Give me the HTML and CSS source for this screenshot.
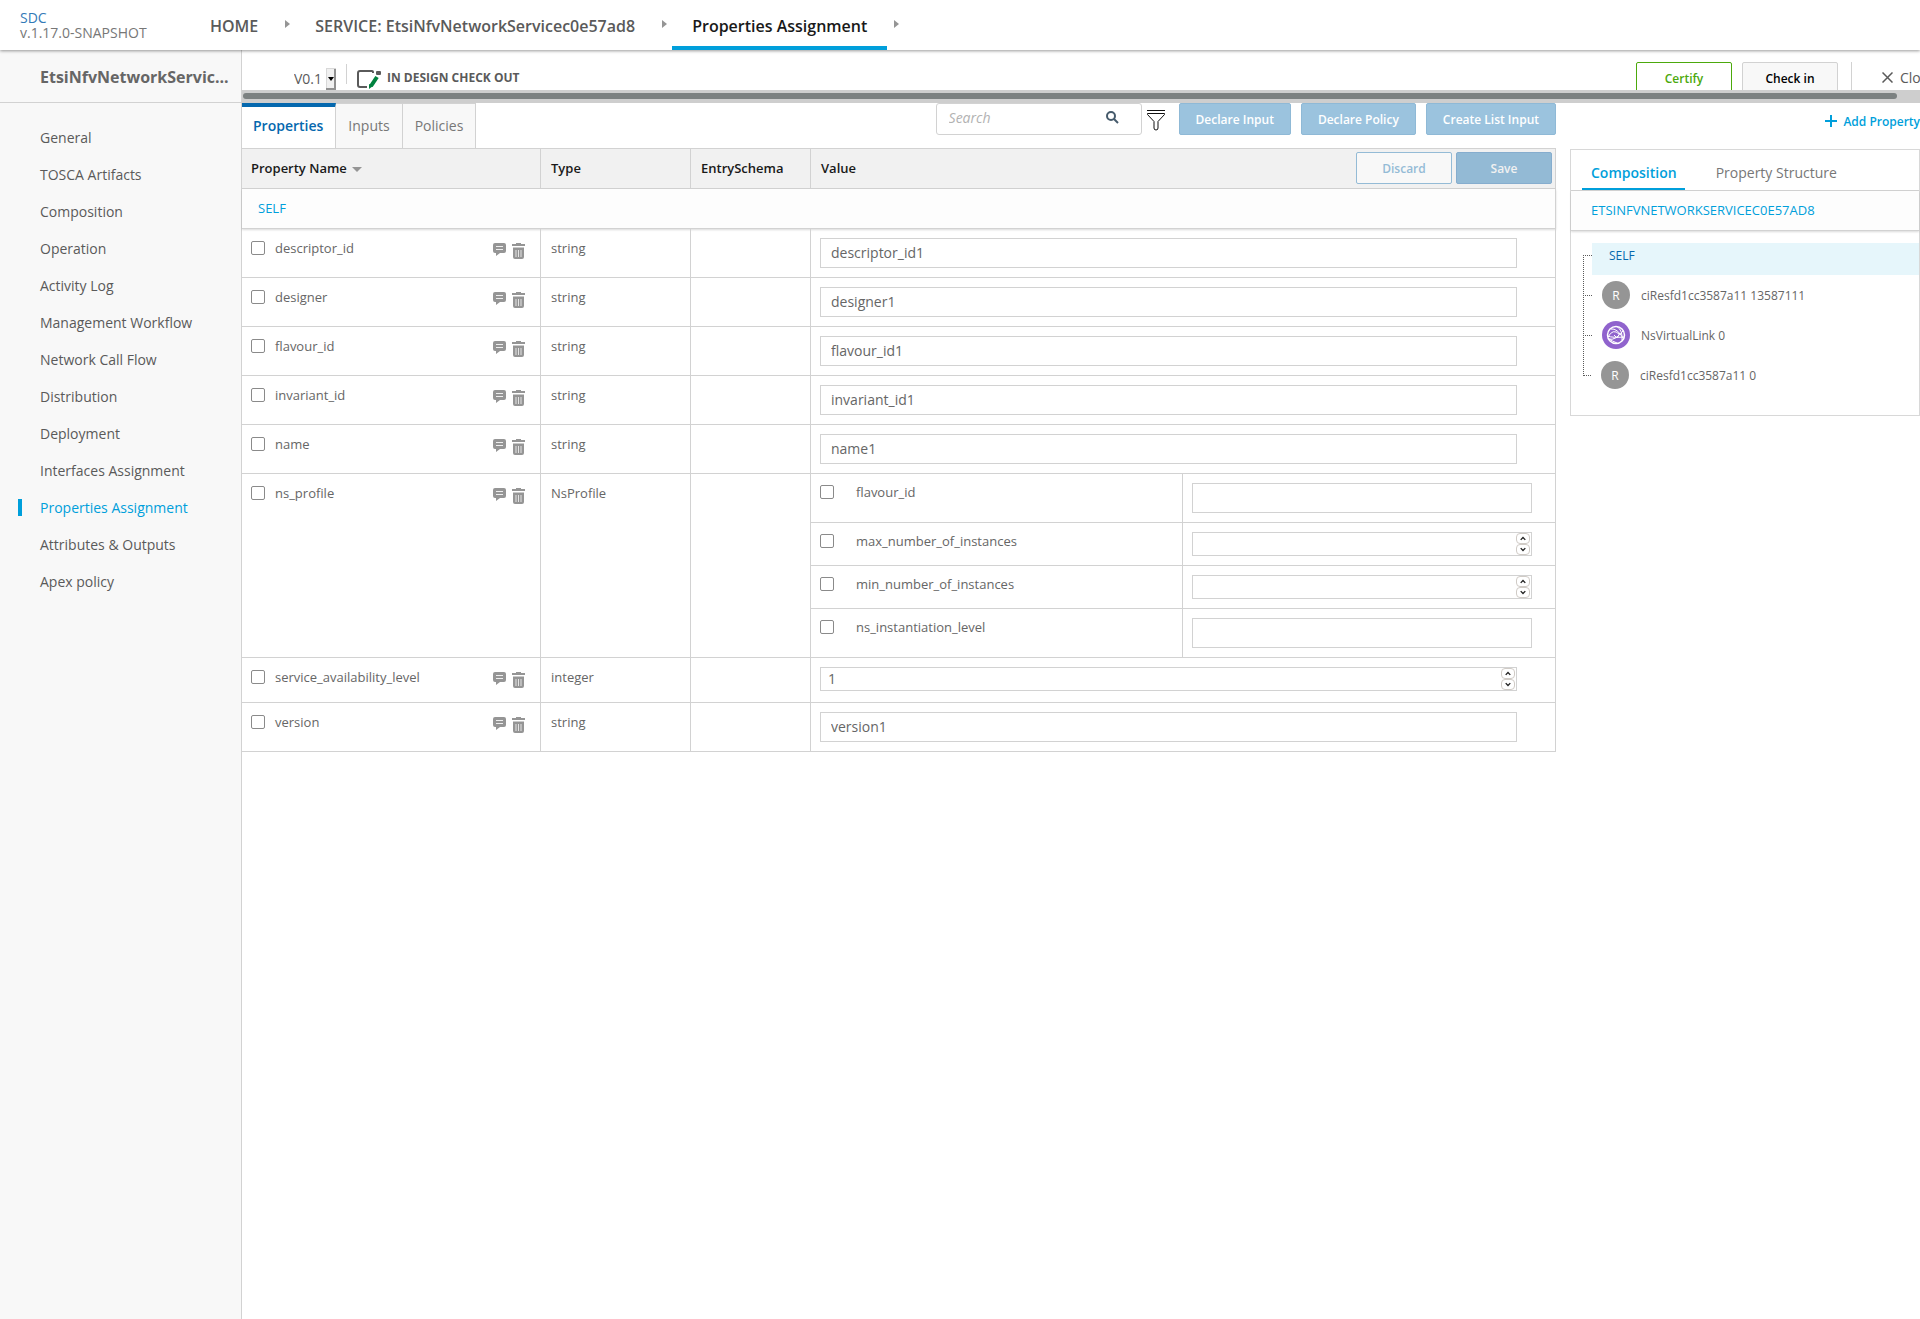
FILE: index.html
```html
<!DOCTYPE html>
<html lang="en">

<head>
  <meta charset="UTF-8">
  <meta name="viewport" content="width=device-width, initial-scale=1.0">
  <title>SDC - Properties Assignment</title>
  <link rel="stylesheet" href="styles.css">
</head>

<body>
  <svg class="sprite" aria-hidden="true">
    <symbol id="comment" viewBox="0 0 13 13">
      <path fill="#959595" d="M2 0h9q2 0 2 2v6q0 2-2 2H7L3 13V10H2Q0 10 0 8V2Q0 0 2 0z" />
      <path stroke="#eee" d="M3 3.500h7M3 6.500h7" />
    </symbol>
    <symbol id="trash" viewBox="0 0 13 16">
      <path fill="#959595" d="M0 1h4V0h5v1h4v2H0zM1 4.500h11V14q0 2-2 2H3q-2 0-2-2z" />
      <path stroke="#e4e4e4" d="M4 7v7M6.500 7v7M9 7v7" />
    </symbol>
    <symbol id="up" viewBox="0 0 14 12">
      <path fill="none" stroke="#222" stroke-width="1.500" d="M4.500 7.500L7 5l2.500 2.500" />
    </symbol>
    <symbol id="down" viewBox="0 0 14 12">
      <path fill="none" stroke="#222" stroke-width="1.500" d="M4.500 4.500L7 7l2.500-2.500" />
    </symbol>
  </svg>

  <header class="top-nav">
    <div class="logo">
      <a href="#">SDC</a>
      <span>v.1.17.0-SNAPSHOT</span>
    </div>
    <nav class="breadcrumbs">
      <a href="#">HOME</a>
      <i class="arrow"></i>
      <a href="#">SERVICE: EtsiNfvNetworkServicec0e57ad8</a>
      <i class="arrow"></i>
      <a href="#" class="selected">Properties Assignment</a>
      <i class="arrow"></i>
    </nav>
  </header>

  <div class="workspace">
    <aside class="sidebar">
      <h1>EtsiNfvNetworkServic...</h1>
      <nav class="menu">
        <a href="#">General</a>
        <a href="#">TOSCA Artifacts</a>
        <a href="#">Composition</a>
        <a href="#">Operation</a>
        <a href="#">Activity Log</a>
        <a href="#">Management Workflow</a>
        <a href="#">Network Call Flow</a>
        <a href="#">Distribution</a>
        <a href="#">Deployment</a>
        <a href="#">Interfaces Assignment</a>
        <a href="#" class="selected">Properties Assignment</a>
        <a href="#">Attributes &amp; Outputs</a>
        <a href="#">Apex policy</a>
      </nav>
    </aside>

    <main class="main">
      <div class="toolbar">
        <div class="version">
          <select aria-label="Version">
            <option>V0.1</option>
          </select>
          <svg class="version-arrow" width="10" height="22" viewBox="0 0 10 22" aria-hidden="true">
            <path fill="#d8d8d8" d="M0 0h10v22H0z" />
            <path fill="#f0f0f0" d="M1 1h7v19H1z" />
            <path fill="#909090" d="M8 1h2v21H0v-2h8z" />
            <path fill="#000" d="M2 9h6l-3 4z" />
          </svg>
        </div>
        <div class="status">
          <svg width="25" height="19" viewBox="0 0 25 19" aria-hidden="true">
            <path fill="none" stroke="#5a5a5a" stroke-width="2" d="M16 3V2q0-1-1-1H3Q1 1 1 3v12q0 2 2 2h7" />
            <rect x="19" y="1" width="5" height="4" rx="1" fill="#5a5a5a" />
            <path stroke="#00823f" stroke-width="4" d="M20 7l-6 9" />
            <path fill="#00823f" d="M12 14l4 2-4 3z" />
          </svg>
          <span>IN DESIGN CHECK OUT</span>
        </div>
        <div class="actions">
          <button class="btn certify">Certify</button>
          <button class="btn checkin">Check in</button>
          <button class="close">
            <svg width="11" height="11" viewBox="0 0 11 11" aria-hidden="true">
              <path stroke="#5a5a5a" stroke-width="1.500" d="M.5.5l10 10M10.500.5l-10 10" />
            </svg>
            Close
          </button>
        </div>
      </div>
      <div class="scrollbar"><div class="thumb"></div></div>

      <div class="content">
        <section class="properties">
          <div class="table-top">
            <div class="tabs">
              <button class="selected">Properties</button>
              <button>Inputs</button>
              <button>Policies</button>
            </div>
            <div class="tools">
              <div class="search">
                <input type="text" placeholder="Search" aria-label="Search">
                <svg width="13" height="13" viewBox="0 0 13 13" aria-hidden="true">
                  <circle cx="5" cy="5" r="4" fill="none" stroke="#455a6b" stroke-width="2" />
                  <path stroke="#455a6b" stroke-width="2" d="M8 8l4 4" />
                </svg>
              </div>
              <button class="filter" aria-label="Filter">
                <svg width="18" height="21" viewBox="0 0 18 21">
                  <path fill="none" stroke="#111" d="M0 .5h18M.5 3.500h17v1L11 11.500V18q0 2-2 2t-2-2v-6.500L.5 4.500z" />
                </svg>
              </button>
              <button class="btn blue">Declare Input</button>
              <button class="btn blue">Declare Policy</button>
              <button class="btn blue">Create List Input</button>
            </div>
          </div>

          <table class="properties-table">
            <colgroup>
              <col class="col-name">
              <col class="col-type">
              <col class="col-schema">
              <col>
            </colgroup>
            <thead>
              <tr>
                <th>Property Name <i class="sort"></i></th>
                <th>Type</th>
                <th>EntrySchema</th>
                <th>
                  <div class="value-head">
                    Value
                    <button class="btn discard">Discard</button>
                    <button class="btn save">Save</button>
                  </div>
                </th>
              </tr>
            </thead>
            <tbody>
              <tr class="group">
                <td colspan="4">SELF</td>
              </tr>
              <tr>
                <td>
                  <div class="name">
                    <label><input type="checkbox">descriptor_id</label>
                    <svg width="13" height="13"><use href="#comment" /></svg>
                    <svg width="13" height="16"><use href="#trash" /></svg>
                  </div>
                </td>
                <td>string</td>
                <td></td>
                <td class="value"><input type="text" value="descriptor_id1" aria-label="descriptor_id value"></td>
              </tr>
              <tr>
                <td>
                  <div class="name">
                    <label><input type="checkbox">designer</label>
                    <svg width="13" height="13"><use href="#comment" /></svg>
                    <svg width="13" height="16"><use href="#trash" /></svg>
                  </div>
                </td>
                <td>string</td>
                <td></td>
                <td class="value"><input type="text" value="designer1" aria-label="designer value"></td>
              </tr>
              <tr>
                <td>
                  <div class="name">
                    <label><input type="checkbox">flavour_id</label>
                    <svg width="13" height="13"><use href="#comment" /></svg>
                    <svg width="13" height="16"><use href="#trash" /></svg>
                  </div>
                </td>
                <td>string</td>
                <td></td>
                <td class="value"><input type="text" value="flavour_id1" aria-label="flavour_id value"></td>
              </tr>
              <tr>
                <td>
                  <div class="name">
                    <label><input type="checkbox">invariant_id</label>
                    <svg width="13" height="13"><use href="#comment" /></svg>
                    <svg width="13" height="16"><use href="#trash" /></svg>
                  </div>
                </td>
                <td>string</td>
                <td></td>
                <td class="value"><input type="text" value="invariant_id1" aria-label="invariant_id value"></td>
              </tr>
              <tr>
                <td>
                  <div class="name">
                    <label><input type="checkbox">name</label>
                    <svg width="13" height="13"><use href="#comment" /></svg>
                    <svg width="13" height="16"><use href="#trash" /></svg>
                  </div>
                </td>
                <td>string</td>
                <td></td>
                <td class="value"><input type="text" value="name1" aria-label="name value"></td>
              </tr>
              <tr>
                <td>
                  <div class="name">
                    <label><input type="checkbox">ns_profile</label>
                    <svg width="13" height="13"><use href="#comment" /></svg>
                    <svg width="13" height="16"><use href="#trash" /></svg>
                  </div>
                </td>
                <td>NsProfile</td>
                <td></td>
                <td class="nested">
                  <table>
                    <tr>
                      <td><label><input type="checkbox">flavour_id</label></td>
                      <td class="value"><input type="text" aria-label="ns_profile flavour_id"></td>
                    </tr>
                    <tr>
                      <td><label><input type="checkbox">max_number_of_instances</label></td>
                      <td class="value">
                        <div class="number">
                          <input type="number" aria-label="max_number_of_instances">
                          <div class="spin">
                            <button aria-label="Increase"><svg width="14" height="11"><use href="#up" /></svg></button>
                            <button aria-label="Decrease"><svg width="14" height="11"><use href="#down" /></svg></button>
                          </div>
                        </div>
                      </td>
                    </tr>
                    <tr>
                      <td><label><input type="checkbox">min_number_of_instances</label></td>
                      <td class="value">
                        <div class="number">
                          <input type="number" aria-label="min_number_of_instances">
                          <div class="spin">
                            <button aria-label="Increase"><svg width="14" height="11"><use href="#up" /></svg></button>
                            <button aria-label="Decrease"><svg width="14" height="11"><use href="#down" /></svg></button>
                          </div>
                        </div>
                      </td>
                    </tr>
                    <tr>
                      <td><label><input type="checkbox">ns_instantiation_level</label></td>
                      <td class="value"><input type="text" aria-label="ns_instantiation_level"></td>
                    </tr>
                  </table>
                </td>
              </tr>
              <tr>
                <td>
                  <div class="name">
                    <label><input type="checkbox">service_availability_level</label>
                    <svg width="13" height="13"><use href="#comment" /></svg>
                    <svg width="13" height="16"><use href="#trash" /></svg>
                  </div>
                </td>
                <td>integer</td>
                <td></td>
                <td class="value">
                  <div class="number">
                    <input type="number" value="1" aria-label="service_availability_level value">
                    <div class="spin">
                      <button aria-label="Increase"><svg width="14" height="11"><use href="#up" /></svg></button>
                      <button aria-label="Decrease"><svg width="14" height="11"><use href="#down" /></svg></button>
                    </div>
                  </div>
                </td>
              </tr>
              <tr>
                <td>
                  <div class="name">
                    <label><input type="checkbox">version</label>
                    <svg width="13" height="13"><use href="#comment" /></svg>
                    <svg width="13" height="16"><use href="#trash" /></svg>
                  </div>
                </td>
                <td>string</td>
                <td></td>
                <td class="value"><input type="text" value="version1" aria-label="version value"></td>
              </tr>
            </tbody>
          </table>
        </section>

        <section class="side">
          <div class="side-top">
            <a href="#" class="add-property">
              <svg width="12" height="12" viewBox="0 0 12 12" aria-hidden="true">
                <path stroke="#009fdb" stroke-width="2" d="M6 0v12M0 6h12" />
              </svg>
              Add Property
            </a>
          </div>
          <div class="hierarchy">
            <div class="hierarchy-tabs">
              <button class="selected">Composition</button>
              <button>Property Structure</button>
            </div>
            <div class="hierarchy-title">ETSINFVNETWORKSERVICEC0E57AD8</div>
            <ul class="tree">
              <li class="selected"><a href="#">SELF</a></li>
              <li><a href="#"><span class="circle">R</span>ciResfd1cc3587a11 13587111</a></li>
              <li>
                <a href="#">
                  <span class="circle purple">
                    <svg width="20" height="20" viewBox="0 0 20 20" fill="none" stroke="#fff" aria-hidden="true">
                      <circle cx="10" cy="10" r="8.500" stroke-width="1.500" />
                      <path d="M2 12q5-9 11-3M11 1.500q6 4 5 14M3 14q6 2 14-8M1.500 11q5 2 17 1M5 4q6-1 12 9M8 10l3 3 3-5M3 14q3 2 8 4" />
                    </svg>
                  </span>NsVirtualLink 0
                </a>
              </li>
              <li><a href="#"><span class="circle">R</span>ciResfd1cc3587a11 0</a></li>
            </ul>
          </div>
        </section>
      </div>
    </main>
  </div>
</body>

</html>
```

FILE: styles.css
```css
* {
  box-sizing: border-box;
}

body {
  margin: 0;
  min-height: 100vh;
  display: flex;
  flex-direction: column;
  background: #fff;
  color: #5a5a5a;
  font-family: "Open Sans", sans-serif;
  font-size: 13px;
}

a {
  color: inherit;
  text-decoration: none;
}

button,
input,
select {
  font-family: inherit;
  font-size: inherit;
  color: inherit;
}

button {
  margin: 0;
  padding: 0;
  border: 0;
  background: none;
  white-space: nowrap;
}

svg {
  display: block;
  flex: none;
}

.sprite {
  position: absolute;
  width: 0;
  height: 0;
}

/* top navigation */

.top-nav {
  position: relative;
  z-index: 1;
  display: flex;
  height: 50px;
  padding-left: 20px;
  box-shadow: 0 1px 3px rgba(0, 0, 0, 0.4);
}

.logo {
  display: flex;
  flex-direction: column;
  width: 170px;
  padding-top: 10px;
  font-size: 14px;
  line-height: 15px;
  color: #777;
}

.logo a {
  color: #337ab7;
}

.breadcrumbs {
  display: flex;
  font-size: 16px;
  font-weight: 600;
}

.breadcrumbs a {
  padding: 0 20px;
  line-height: 52px;
  height: 50px;
}

.breadcrumbs .selected {
  border-bottom: 4px solid #009fdb;
  color: #191919;
}

.arrow {
  margin: 20px 5px 0 7px;
  width: 0;
  height: 0;
  border: 4px solid transparent;
  border-left: 5px solid #959595;
  border-right: 0;
}

/* left menu */

.workspace {
  display: flex;
  flex: 1;
}

.sidebar {
  flex: none;
  width: 242px;
  border-right: 1px solid #d2d2d2;
  background: #f8f8f8;
}

.sidebar h1 {
  margin: 0 0 16px;
  padding: 0 10px 0 40px;
  height: 53px;
  border-bottom: 1px solid #d2d2d2;
  font-size: 16px;
  font-weight: 700;
  line-height: 54px;
  color: #666;
  white-space: nowrap;
}

.menu {
  display: flex;
  flex-direction: column;
  padding-left: 18px;
  font-size: 14px;
}

.menu a {
  display: flex;
  align-items: center;
  height: 37px;
}

.menu a::before {
  content: "";
  width: 4px;
  height: 17px;
  margin-right: 18px;
}

.menu .selected {
  color: #009fdb;
}

.menu .selected::before {
  background: #009fdb;
}

/* toolbar */

.main {
  flex: 1;
  min-width: 0;
}

.toolbar {
  display: flex;
  height: 40px;
  padding: 12px 0 0 52px;
  overflow: hidden;
}

.version {
  position: relative;
  width: 53px;
  height: 20px;
  margin-top: 2px;
  border-right: 1px solid #d2d2d2;
}

.version select {
  appearance: none;
  width: 32px;
  height: 28px;
  padding: 0;
  border: 0;
  background: none;
  font-size: 14px;
}

.version-arrow {
  position: absolute;
  top: 4px;
  left: 32px;
  pointer-events: none;
}

.status {
  display: flex;
  flex: 1;
  gap: 5px;
  padding-left: 10px;
  color: #5a5a5a;
  font-size: 12px;
  font-weight: 700;
  line-height: 32px;
}

.status svg {
  margin-top: 8px;
}

.actions {
  display: flex;
  flex: none;
  align-items: flex-start;
  gap: 10px;
  width: 284px;
}

.btn {
  flex: none;
  height: 32px;
  padding: 0 16px;
  border: 1px solid;
  border-radius: 2px;
  font-size: 12px;
  font-weight: 600;
}

.certify,
.checkin,
.discard,
.save {
  width: 96px;
}

.certify {
  border-color: #4ca90c;
  color: #4ca90c;
}

.checkin {
  border-color: #d2d2d2;
  background: #f8f8f8;
  color: #000;
}

.close {
  display: flex;
  flex: none;
  gap: 7px;
  align-items: center;
  height: 30px;
  margin-left: 3px;
  padding-left: 30px;
  border-left: 1px solid #d2d2d2;
  font-size: 14px;
}

.scrollbar {
  height: 13px;
  padding: 3px 23px 4px 1px;
  background: #cecece;
}

.thumb {
  height: 6px;
  border-radius: 3px;
  background: #7c8181;
}

/* properties */

.content {
  display: flex;
  gap: 14px;
}

.properties {
  flex: 1;
  min-width: 0;
}

.table-top {
  display: flex;
  justify-content: space-between;
  height: 45px;
}

.tabs {
  display: flex;
}

.tabs button {
  padding: 0 12px 2px;
  border: 1px solid #d2d2d2;
  border-width: 1px 1px 0 0;
  background: #f8f8f8;
  color: #777;
  font-size: 14px;
}

.tabs .selected {
  padding: 0 12px 4px 11px;
  border-top: 4px solid #0568ae;
  background: #fff;
  color: #0568ae;
  font-weight: 600;
}

.tools {
  display: flex;
  gap: 10px;
  height: 32px;
}

.search {
  display: flex;
  align-items: center;
  width: 206px;
  margin-right: -5px;
  padding: 0 22px 3px 12px;
  border: 1px solid #d2d2d2;
  border-radius: 3px;
}

.search input {
  flex: 1;
  min-width: 0;
  padding: 0;
  border: 0;
  outline: 0;
  font-size: 14px;
}

.search input::placeholder {
  color: #b2b2b2;
  font-style: italic;
}

.filter {
  padding-top: 2px;
  margin-right: 4px;
}

.blue {
  border-color: #8fb9d6;
  background: #9bc3de;
  color: #fff;
}

.properties-table,
.nested table {
  width: 100%;
  border-spacing: 0;
  table-layout: fixed;
}

.properties-table {
  border-top: 1px solid #d2d2d2;
}

.col-name {
  width: 299px;
}

.col-type {
  width: 150px;
}

.col-schema {
  width: 120px;
}

th {
  height: 40px;
  padding: 0 3px 1px 10px;
  border: 1px solid #d2d2d2;
  border-width: 0 1px 1px 0;
  background: #f1f1f1;
  color: #191919;
  font-weight: 600;
  text-align: left;
}

th:first-child {
  padding-left: 9px;
}

.sort {
  display: inline-block;
  margin: 0 0 1px 2px;
  border: 5px solid transparent;
  border-top-color: #959595;
  border-bottom: 0;
}

.value-head {
  display: flex;
  align-items: center;
  gap: 4px;
}

.discard {
  margin-left: auto;
  border-color: #94bbd6;
  background: #f8f8f8;
  color: #94bbd6;
}

.save {
  border-color: #86adce;
  background: #93bad5;
  color: #f1f1f1;
}

td {
  height: 45px;
  padding: 10px 10px 0;
  border: 1px solid #d2d2d2;
  border-width: 0 1px 1px 0;
  color: #666;
  line-height: 18px;
  vertical-align: top;
}

td:first-child {
  padding-left: 9px;
}

.group td,
.group td:first-child {
  height: 40px;
  padding: 10px 16px 0;
  box-shadow: 0 1px 2px rgba(0, 0, 0, 0.15);
  background: #fdfdfd;
  color: #009fdb;
}

.name {
  display: flex;
  gap: 6px;
  padding-right: 5px;
}

.name label {
  flex: 1;
}

.name svg {
  margin-top: 4px;
}

label {
  display: flex;
  align-items: flex-start;
}

input[type="checkbox"] {
  width: 14px;
  height: 14px;
  margin: 2px 10px 0 0;
  appearance: none;
  border: 1px solid #8a8a8a;
  border-radius: 2px;
  background: #fff;
}

input[type="checkbox"]:checked {
  background: #009fdb;
}

td.value {
  padding: 9px 38px 9px 9px;
}

td.value input {
  display: block;
  width: 100%;
  height: 30px;
  padding: 0 10px 2px;
  border: 1px solid #d2d2d2;
  border-radius: 0;
  background: #fff;
  font-size: 14px;
}

.number {
  position: relative;
}

td.value input[type="number"] {
  appearance: textfield;
  height: 24px;
  padding: 0 18px 2px 7px;
}

.spin {
  position: absolute;
  top: 1px;
  right: 2px;
  width: 14px;
}

.spin button {
  display: block;
  width: 14px;
  height: 11px;
  border: 1px solid #d0cbc6;
  border-radius: 4px;
  overflow: hidden;
}

.spin svg {
  margin: -1px;
}

td.nested {
  padding: 0;
}

.nested td {
  height: 43px;
  padding-top: 9px;
}

.nested td.value {
  padding: 9px 23px 9px 9px;
  border-right: 0;
}

.nested tr:last-child td {
  border-bottom: 0;
}

.nested input[type="checkbox"] {
  margin-right: 22px;
}

/* composition tree */

.side {
  flex: none;
  width: 350px;
}

.side-top {
  display: flex;
  justify-content: flex-end;
  height: 46px;
}

.add-property {
  display: flex;
  gap: 6px;
  align-items: center;
  height: 36px;
  color: #009fdb;
  font-size: 12px;
  font-weight: 600;
}

.hierarchy {
  height: 267px;
  border: 1px solid #d8d8d8;
}

.hierarchy-tabs {
  display: flex;
  gap: 22px;
  height: 41px;
  padding-left: 11px;
  border-bottom: 1px solid #d2d2d2;
}

.hierarchy-tabs button {
  padding: 6px 8px 0 9px;
  border-bottom: 2px solid transparent;
  color: #777;
  font-size: 14px;
}

.hierarchy-tabs .selected {
  border-color: #009fdb;
  color: #009fdb;
  font-weight: 600;
}

.hierarchy-title {
  height: 40px;
  padding-left: 20px;
  border-bottom: 1px solid #d2d2d2;
  box-shadow: 0 1px 2px rgba(0, 0, 0, 0.15);
  background: #fdfdfd;
  color: #009fdb;
  line-height: 38px;
}

.tree {
  margin: 12px 0 0;
  padding: 0 0 0 12px;
  list-style: none;
  color: #666;
  font-size: 12px;
}

.tree li {
  display: flex;
  align-items: flex-start;
  height: 40px;
}

/* dotted connector, the last one has only the corner */
.tree li::before {
  content: "";
  width: 8px;
  height: 40px;
  margin-top: 12px;
  border: 1px dotted #5a5a5a;
  border-width: 1px 0 0 1px;
}

.tree li:last-child::before {
  height: 1px;
  border-left: 0;
}

.tree a {
  display: flex;
  flex: 1;
  gap: 11px;
  align-items: center;
  height: 32px;
  margin-top: -4px;
  padding-left: 10px;
}

.tree .selected a {
  height: 32px;
  margin-top: 0;
  padding: 0 0 8px 17px;
  background: #e6f6fb;
  color: #0568ae;
}

.circle {
  display: flex;
  align-items: center;
  justify-content: center;
  width: 28px;
  height: 28px;
  border-radius: 50%;
  background: #959595;
  color: #fff;
}

.purple {
  background: #9063cd;
}
```
